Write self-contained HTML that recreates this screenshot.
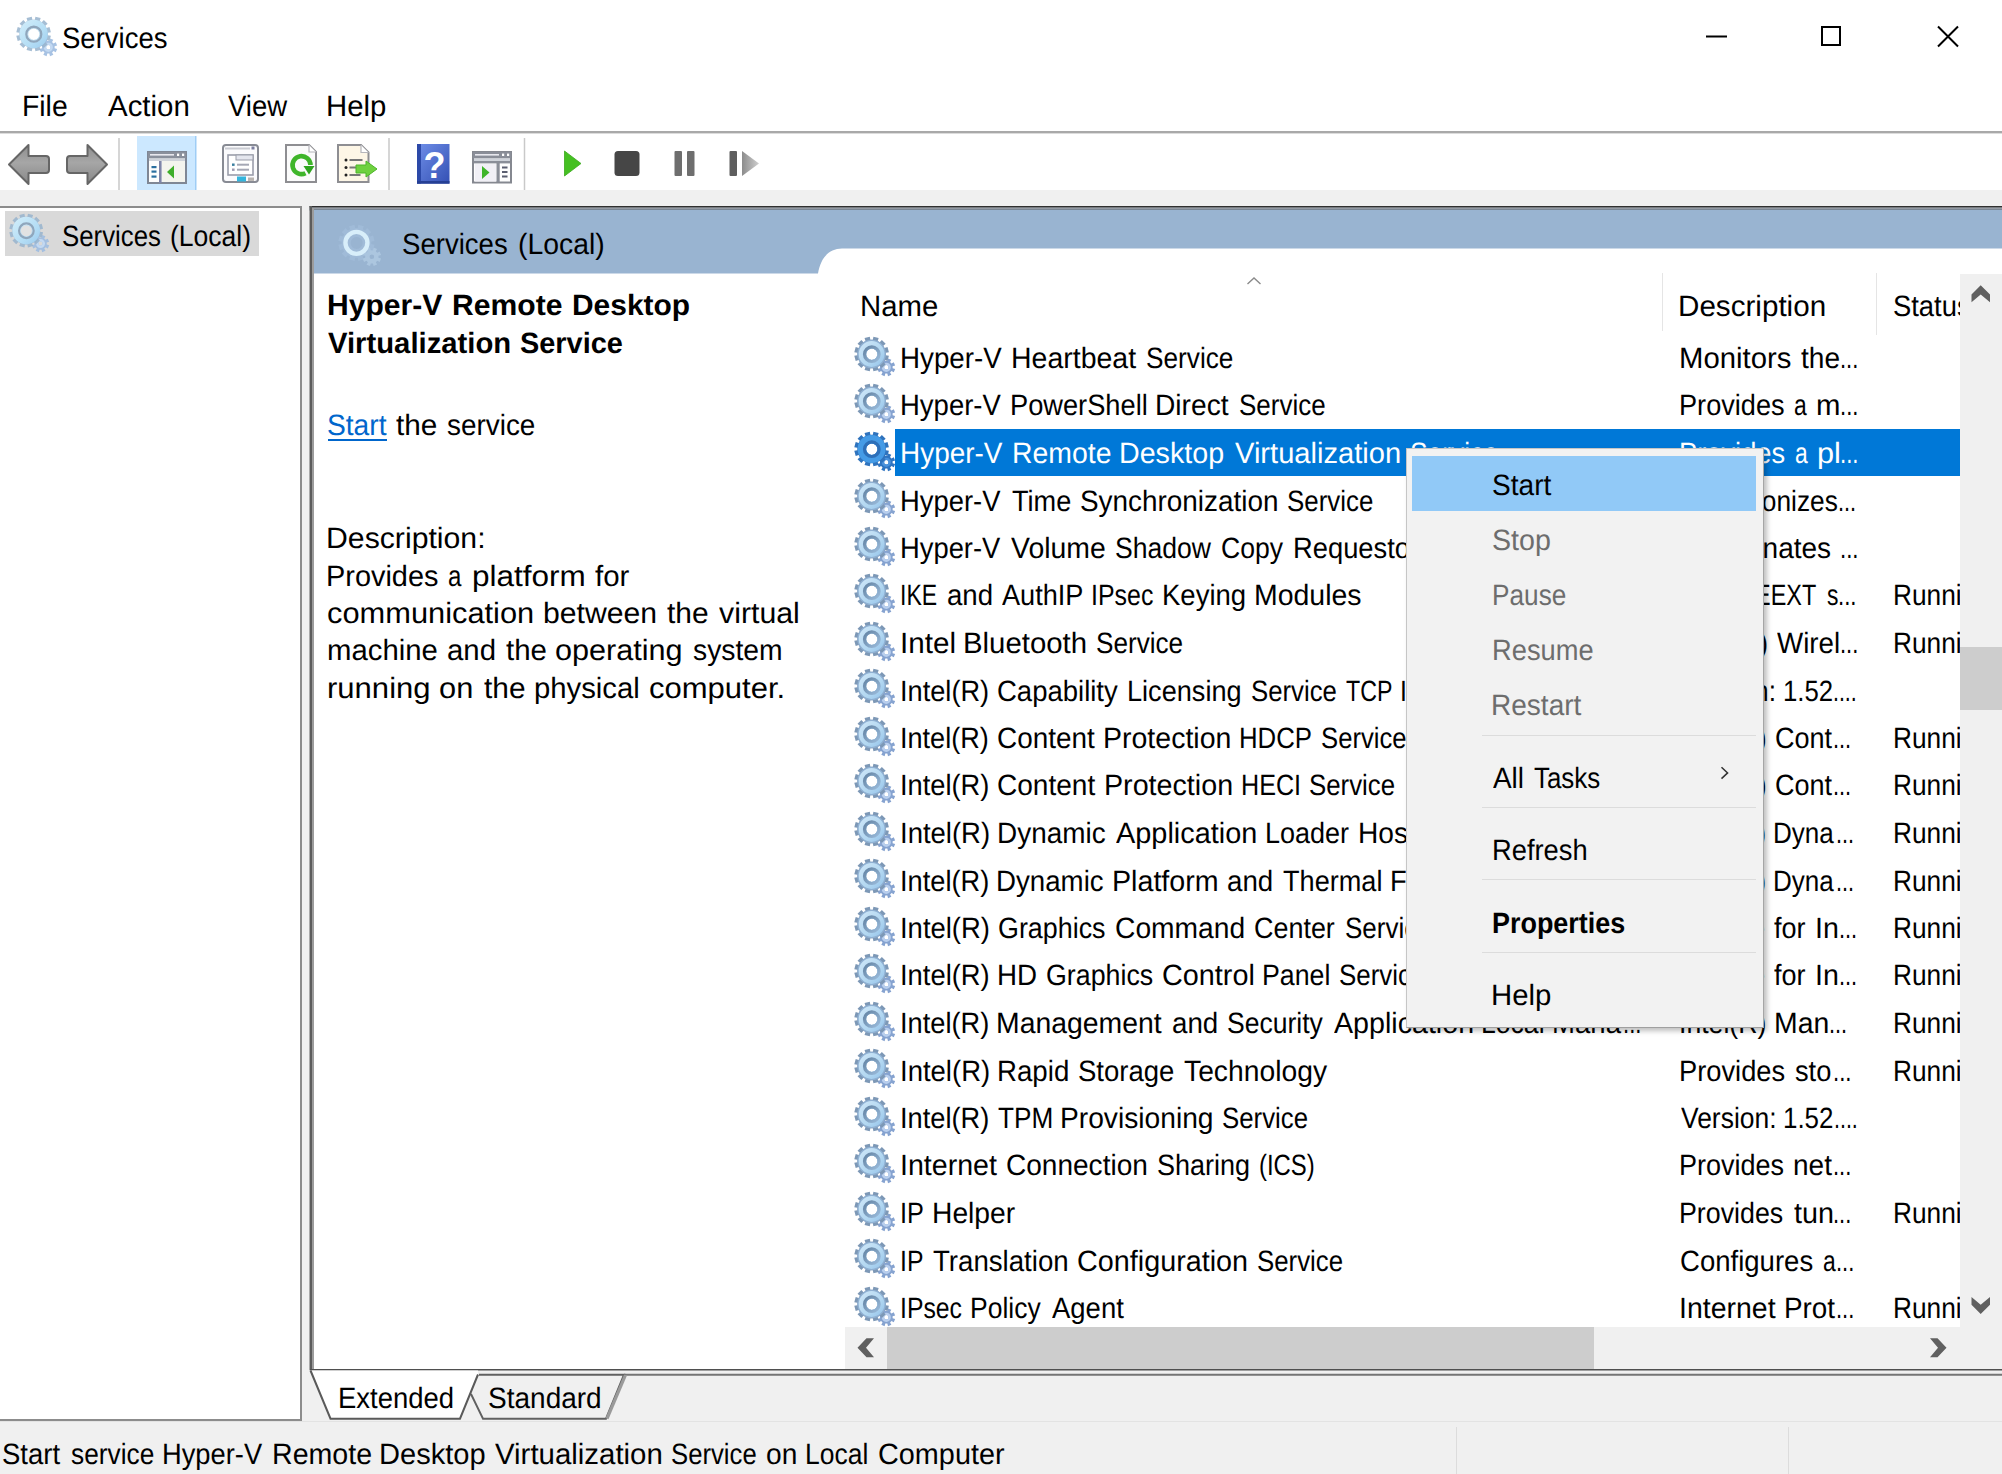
<!DOCTYPE html>
<html lang="en"><head><meta charset="utf-8"><title>Services</title>
<style>
html,body{margin:0;padding:0;}
body{width:2002px;height:1474px;overflow:hidden;background:#fff;position:relative;font-family:"Liberation Sans",sans-serif;}
.a{position:absolute;display:block}
.t{position:absolute;white-space:pre;line-height:40px;font-size:29.3px;color:#000;text-rendering:geometricPrecision;transform-origin:0 0;font-family:"Liberation Sans",sans-serif;}
</style></head><body>
<svg width="0" height="0" style="position:absolute"><defs>
<linearGradient id="gg" x1="0" y1="0" x2="1" y2="1"><stop offset="0" stop-color="#cfe7f8"/><stop offset="0.6" stop-color="#b2d7f1"/><stop offset="1" stop-color="#93c2ea"/></linearGradient>
<linearGradient id="gl" x1="0" y1="0" x2="1" y2="1"><stop offset="0" stop-color="#d3eefa"/><stop offset="0.6" stop-color="#b5def5"/><stop offset="1" stop-color="#9ccbee"/></linearGradient>
<linearGradient id="gr" x1="0" y1="0" x2="1" y2="1"><stop offset="0" stop-color="#5f7f9f"/><stop offset="1" stop-color="#9fc0e0"/></linearGradient>
</defs>
<symbol id="gear" viewBox="0 0 42 42">
<path d="M38.62 32.28 L41.14 33.00 L39.78 36.31 L37.49 35.05 L36.08 36.47 L37.35 38.75 L34.04 40.13 L33.32 37.62 L31.32 37.62 L30.60 40.14 L27.29 38.78 L28.55 36.49 L27.13 35.08 L24.85 36.35 L23.47 33.04 L25.98 32.32 L25.98 30.32 L23.46 29.60 L24.82 26.29 L27.11 27.55 L28.52 26.13 L27.25 23.85 L30.56 22.47 L31.28 24.98 L33.28 24.98 L34.00 22.46 L37.31 23.82 L36.05 26.11 L37.47 27.52 L39.75 26.25 L41.13 29.56 L38.62 30.28 Z M30.10 31.30 a2.20 2.20 0 1 0 4.40 0 a2.20 2.20 0 1 0 -4.40 0 Z" fill="#86a3d0" fill-rule="evenodd"/>
<path d="M27.70 31.30 a4.60 4.60 0 1 0 9.20 0 a4.60 4.60 0 1 0 -9.20 0 Z M30.10 31.30 a2.20 2.20 0 1 0 4.40 0 a2.20 2.20 0 1 0 -4.40 0 Z" fill="#b9cfee" fill-rule="evenodd"/>
<path d="M31.85 19.20 L34.90 19.83 L33.50 25.07 L30.54 24.09 L29.34 26.16 L31.67 28.23 L27.83 32.07 L25.76 29.74 L23.69 30.94 L24.67 33.90 L19.43 35.30 L18.80 32.25 L16.40 32.25 L15.77 35.30 L10.53 33.90 L11.51 30.94 L9.44 29.74 L7.37 32.07 L3.53 28.23 L5.86 26.16 L4.66 24.09 L1.70 25.07 L0.30 19.83 L3.35 19.20 L3.35 16.80 L0.30 16.17 L1.70 10.93 L4.66 11.91 L5.86 9.84 L3.53 7.77 L7.37 3.93 L9.44 6.26 L11.51 5.06 L10.53 2.10 L15.77 0.70 L16.40 3.75 L18.80 3.75 L19.43 0.70 L24.67 2.10 L23.69 5.06 L25.76 6.26 L27.83 3.93 L31.67 7.77 L29.34 9.84 L30.54 11.91 L33.50 10.93 L34.90 16.17 L31.85 16.80 Z M12.10 18.20 a5.70 5.70 0 1 0 11.40 0 a5.70 5.70 0 1 0 -11.40 0 Z" fill="#7d98b6" fill-rule="evenodd"/>
<path d="M3.30 18.00 a14.30 14.30 0 1 0 28.60 0 a14.30 14.30 0 1 0 -28.60 0 Z M12.10 18.20 a5.70 5.70 0 1 0 11.40 0 a5.70 5.70 0 1 0 -11.40 0 Z" fill="#8fb0d2" fill-rule="evenodd"/>
<path d="M4.70 18.00 a12.90 12.90 0 1 0 25.80 0 a12.90 12.90 0 1 0 -25.80 0 Z M12.10 18.20 a5.70 5.70 0 1 0 11.40 0 a5.70 5.70 0 1 0 -11.40 0 Z" fill="url(#gg)" fill-rule="evenodd"/>
<path d="M8.90 18.20 a8.90 8.90 0 1 0 17.80 0 a8.90 8.90 0 1 0 -17.80 0 Z M12.10 18.20 a5.70 5.70 0 1 0 11.40 0 a5.70 5.70 0 1 0 -11.40 0 Z" fill="url(#gr)" fill-rule="evenodd"/>
</symbol>
<symbol id="gears" viewBox="0 0 42 42">
<path d="M38.62 32.28 L41.14 33.00 L39.78 36.31 L37.49 35.05 L36.08 36.47 L37.35 38.75 L34.04 40.13 L33.32 37.62 L31.32 37.62 L30.60 40.14 L27.29 38.78 L28.55 36.49 L27.13 35.08 L24.85 36.35 L23.47 33.04 L25.98 32.32 L25.98 30.32 L23.46 29.60 L24.82 26.29 L27.11 27.55 L28.52 26.13 L27.25 23.85 L30.56 22.47 L31.28 24.98 L33.28 24.98 L34.00 22.46 L37.31 23.82 L36.05 26.11 L37.47 27.52 L39.75 26.25 L41.13 29.56 L38.62 30.28 Z M30.10 31.30 a2.20 2.20 0 1 0 4.40 0 a2.20 2.20 0 1 0 -4.40 0 Z" fill="#2f74c0" fill-rule="evenodd"/>
<path d="M27.70 31.30 a4.60 4.60 0 1 0 9.20 0 a4.60 4.60 0 1 0 -9.20 0 Z M30.10 31.30 a2.20 2.20 0 1 0 4.40 0 a2.20 2.20 0 1 0 -4.40 0 Z" fill="#4a92dc" fill-rule="evenodd"/>
<path d="M31.85 19.20 L34.90 19.83 L33.50 25.07 L30.54 24.09 L29.34 26.16 L31.67 28.23 L27.83 32.07 L25.76 29.74 L23.69 30.94 L24.67 33.90 L19.43 35.30 L18.80 32.25 L16.40 32.25 L15.77 35.30 L10.53 33.90 L11.51 30.94 L9.44 29.74 L7.37 32.07 L3.53 28.23 L5.86 26.16 L4.66 24.09 L1.70 25.07 L0.30 19.83 L3.35 19.20 L3.35 16.80 L0.30 16.17 L1.70 10.93 L4.66 11.91 L5.86 9.84 L3.53 7.77 L7.37 3.93 L9.44 6.26 L11.51 5.06 L10.53 2.10 L15.77 0.70 L16.40 3.75 L18.80 3.75 L19.43 0.70 L24.67 2.10 L23.69 5.06 L25.76 6.26 L27.83 3.93 L31.67 7.77 L29.34 9.84 L30.54 11.91 L33.50 10.93 L34.90 16.17 L31.85 16.80 Z M12.10 18.20 a5.70 5.70 0 1 0 11.40 0 a5.70 5.70 0 1 0 -11.40 0 Z" fill="#2f73bd" fill-rule="evenodd"/>
<path d="M3.60 18.00 a14.00 14.00 0 1 0 28.00 0 a14.00 14.00 0 1 0 -28.00 0 Z M12.10 18.20 a5.70 5.70 0 1 0 11.40 0 a5.70 5.70 0 1 0 -11.40 0 Z" fill="#459be6" fill-rule="evenodd"/>
<path d="M8.90 18.20 a8.90 8.90 0 1 0 17.80 0 a8.90 8.90 0 1 0 -17.80 0 Z M12.10 18.20 a5.70 5.70 0 1 0 11.40 0 a5.70 5.70 0 1 0 -11.40 0 Z" fill="#2d6fb8" fill-rule="evenodd"/>
</symbol>
<symbol id="gearf" viewBox="0 0 42 42">
<path d="M38.62 32.28 L41.14 33.00 L39.78 36.31 L37.49 35.05 L36.08 36.47 L37.35 38.75 L34.04 40.13 L33.32 37.62 L31.32 37.62 L30.60 40.14 L27.29 38.78 L28.55 36.49 L27.13 35.08 L24.85 36.35 L23.47 33.04 L25.98 32.32 L25.98 30.32 L23.46 29.60 L24.82 26.29 L27.11 27.55 L28.52 26.13 L27.25 23.85 L30.56 22.47 L31.28 24.98 L33.28 24.98 L34.00 22.46 L37.31 23.82 L36.05 26.11 L37.47 27.52 L39.75 26.25 L41.13 29.56 L38.62 30.28 Z M30.10 31.30 a2.20 2.20 0 1 0 4.40 0 a2.20 2.20 0 1 0 -4.40 0 Z" fill="#b3cde6" fill-rule="evenodd" opacity="0.7"/>
<path d="M31.85 19.20 L34.90 19.83 L33.50 25.07 L30.54 24.09 L29.34 26.16 L31.67 28.23 L27.83 32.07 L25.76 29.74 L23.69 30.94 L24.67 33.90 L19.43 35.30 L18.80 32.25 L16.40 32.25 L15.77 35.30 L10.53 33.90 L11.51 30.94 L9.44 29.74 L7.37 32.07 L3.53 28.23 L5.86 26.16 L4.66 24.09 L1.70 25.07 L0.30 19.83 L3.35 19.20 L3.35 16.80 L0.30 16.17 L1.70 10.93 L4.66 11.91 L5.86 9.84 L3.53 7.77 L7.37 3.93 L9.44 6.26 L11.51 5.06 L10.53 2.10 L15.77 0.70 L16.40 3.75 L18.80 3.75 L19.43 0.70 L24.67 2.10 L23.69 5.06 L25.76 6.26 L27.83 3.93 L31.67 7.77 L29.34 9.84 L30.54 11.91 L33.50 10.93 L34.90 16.17 L31.85 16.80 Z M12.10 18.20 a5.70 5.70 0 1 0 11.40 0 a5.70 5.70 0 1 0 -11.40 0 Z" fill="#a8c4df" fill-rule="evenodd" opacity="0.45"/>
<path d="M5.00 18.00 a12.60 12.60 0 1 0 25.20 0 a12.60 12.60 0 1 0 -25.20 0 Z M9.20 18.00 a8.40 8.40 0 1 0 16.80 0 a8.40 8.40 0 1 0 -16.80 0 Z" fill="#d8eefa" fill-rule="evenodd"/>
</symbol>
<symbol id="gearl" viewBox="0 0 42 42">
<path d="M38.62 32.28 L41.14 33.00 L39.78 36.31 L37.49 35.05 L36.08 36.47 L37.35 38.75 L34.04 40.13 L33.32 37.62 L31.32 37.62 L30.60 40.14 L27.29 38.78 L28.55 36.49 L27.13 35.08 L24.85 36.35 L23.47 33.04 L25.98 32.32 L25.98 30.32 L23.46 29.60 L24.82 26.29 L27.11 27.55 L28.52 26.13 L27.25 23.85 L30.56 22.47 L31.28 24.98 L33.28 24.98 L34.00 22.46 L37.31 23.82 L36.05 26.11 L37.47 27.52 L39.75 26.25 L41.13 29.56 L38.62 30.28 Z M30.10 31.30 a2.20 2.20 0 1 0 4.40 0 a2.20 2.20 0 1 0 -4.40 0 Z" fill="#9dbbe0" fill-rule="evenodd" opacity="0.9"/>
<path d="M27.70 31.30 a4.60 4.60 0 1 0 9.20 0 a4.60 4.60 0 1 0 -9.20 0 Z M30.10 31.30 a2.20 2.20 0 1 0 4.40 0 a2.20 2.20 0 1 0 -4.40 0 Z" fill="#c3d9f2" fill-rule="evenodd"/>
<path d="M31.85 19.20 L34.90 19.83 L33.50 25.07 L30.54 24.09 L29.34 26.16 L31.67 28.23 L27.83 32.07 L25.76 29.74 L23.69 30.94 L24.67 33.90 L19.43 35.30 L18.80 32.25 L16.40 32.25 L15.77 35.30 L10.53 33.90 L11.51 30.94 L9.44 29.74 L7.37 32.07 L3.53 28.23 L5.86 26.16 L4.66 24.09 L1.70 25.07 L0.30 19.83 L3.35 19.20 L3.35 16.80 L0.30 16.17 L1.70 10.93 L4.66 11.91 L5.86 9.84 L3.53 7.77 L7.37 3.93 L9.44 6.26 L11.51 5.06 L10.53 2.10 L15.77 0.70 L16.40 3.75 L18.80 3.75 L19.43 0.70 L24.67 2.10 L23.69 5.06 L25.76 6.26 L27.83 3.93 L31.67 7.77 L29.34 9.84 L30.54 11.91 L33.50 10.93 L34.90 16.17 L31.85 16.80 Z M12.10 18.20 a5.70 5.70 0 1 0 11.40 0 a5.70 5.70 0 1 0 -11.40 0 Z" fill="#97b3cd" fill-rule="evenodd" opacity="0.85"/>
<path d="M3.40 18.00 a14.20 14.20 0 1 0 28.40 0 a14.20 14.20 0 1 0 -28.40 0 Z M12.10 18.20 a5.70 5.70 0 1 0 11.40 0 a5.70 5.70 0 1 0 -11.40 0 Z" fill="url(#gl)" fill-rule="evenodd"/>
<path d="M9.20 18.20 a8.60 8.60 0 1 0 17.20 0 a8.60 8.60 0 1 0 -17.20 0 Z M11.50 18.20 a6.30 6.30 0 1 0 12.60 0 a6.30 6.30 0 1 0 -12.60 0 Z" fill="#8fa6bc" fill-rule="evenodd"/>
<path d="M11.50 18.20 a6.30 6.30 0 1 0 12.60 0 a6.30 6.30 0 1 0 -12.60 0 Z" fill="#fff" opacity="0.25"/>
</symbol>
</svg>
<svg class="a" style="left:16px;top:16px" width="42" height="42"><use href="#gearl"/></svg>
<svg class="a" style="left:1690px;top:10px" width="290" height="52" viewBox="1690 10 290 52">
<path d="M1706 36.5h21" stroke="#000" stroke-width="2" fill="none"/>
<rect x="1822" y="27" width="18" height="18" stroke="#000" stroke-width="2" fill="none"/>
<path d="M1938 26.5l20 20M1958 26.5l-20 20" stroke="#000" stroke-width="2" fill="none"/>
</svg>
<div class="a" style="left:0px;top:131px;width:2002px;height:2px;background:#a9a9a9;"></div>
<div class="a" style="left:0px;top:133px;width:2002px;height:1px;background:#dcdcdc;"></div>
<div class="a" style="left:0px;top:190px;width:2002px;height:1284px;background:#f0f0f0;"></div>
<svg class="a" style="left:0;top:134px" width="800" height="56" viewBox="0 134 800 56">
<defs>
<linearGradient id="ag" x1="0" y1="0" x2="0" y2="1"><stop offset="0" stop-color="#8e8e8e"/><stop offset="0.45" stop-color="#a6a6a6"/><stop offset="1" stop-color="#888"/></linearGradient>
<linearGradient id="hg" x1="0" y1="0" x2="1" y2="1"><stop offset="0" stop-color="#6f8fe8"/><stop offset="1" stop-color="#3450b4"/></linearGradient>
<linearGradient id="rg" x1="0" y1="0" x2="1" y2="0"><stop offset="0" stop-color="#8c8c8c"/><stop offset="1" stop-color="#cfcfcf"/></linearGradient>
</defs>
<path d="M9 164.5 L28.5 145 L28.5 156 L46 156 Q49 156 49 159 L49 170 Q49 173 46 173 L28.5 173 L28.5 184 Z" fill="url(#ag)" stroke="#666" stroke-width="2" stroke-linejoin="round"/>
<path d="M107 164.5 L87.5 145 L87.5 156 L70 156 Q67 156 67 159 L67 170 Q67 173 70 173 L87.5 173 L87.5 184 Z" fill="url(#ag)" stroke="#666" stroke-width="2" stroke-linejoin="round"/>
<rect x="118.25" y="138" width="1.5" height="52" fill="#c9c9c9"/>
<rect x="388.25" y="138" width="1.5" height="52" fill="#c9c9c9"/>
<rect x="523.75" y="138" width="1.5" height="52" fill="#c9c9c9"/>
<rect x="137" y="136" width="58" height="55" fill="#cce8ff"/><rect x="195" y="136" width="1.5" height="55" fill="#9fcdf5"/>
<g>
<rect x="148" y="152" width="38" height="31" fill="#fdfdfd" stroke="#7f8795" stroke-width="2"/>
<rect x="148" y="152" width="38" height="6.5" fill="#8a909c"/>
<rect x="150" y="154" width="24" height="1.6" fill="#e8e8ee"/><rect x="177" y="153.6" width="2.2" height="2.4" fill="#fff"/><rect x="182" y="153.6" width="2.2" height="2.4" fill="#fff"/>
<rect x="149" y="158.5" width="36" height="2.5" fill="#cfd3da"/>
<rect x="159" y="161" width="2.6" height="22" fill="#7f85a8"/>
<rect x="162" y="161" width="23" height="21" fill="#f4f4ee"/>
<rect x="151.5" y="166" width="5" height="2.2" fill="#2a6f9f"/><rect x="151.5" y="170.5" width="5" height="2.2" fill="#2a6f9f"/><rect x="151.5" y="175.5" width="5" height="2.2" fill="#2a6f9f"/>
<path d="M167 172 L174 165.5 L174 178.5 Z" fill="#3fae2a"/>
</g>
<g>
<rect x="223" y="145" width="35" height="37" rx="3" fill="#fbfbfd" stroke="#888b94" stroke-width="2"/>
<rect x="225" y="147.5" width="25" height="2" fill="#c9cbd2"/><rect x="251.5" y="146.5" width="3" height="3" fill="#7c7fa0"/>
<rect x="228" y="155" width="25" height="20" fill="#fff" stroke="#9a9daa" stroke-width="1.6"/>
<rect x="236" y="155" width="17" height="5" fill="#e4e6ee" stroke="#9a9daa" stroke-width="1"/>
<rect x="232" y="163.5" width="2.6" height="2.4" fill="#3a7f9f"/><rect x="237" y="163.7" width="12" height="2" fill="#a5a8b5"/>
<rect x="232" y="168.5" width="2.6" height="2.4" fill="#a09ab0"/><rect x="237" y="168.7" width="12" height="2" fill="#a5a8b5"/>
<rect x="237" y="176.5" width="9" height="5" fill="#35b5dd"/><rect x="248" y="177.5" width="6" height="3.4" fill="#b9b4b0"/>
</g>
<g>
<path d="M286 145 L309 145 L316 152 L316 182 L286 182 Z" fill="#fbfbfb" stroke="#8e8e92" stroke-width="2" stroke-linejoin="miter"/>
<path d="M309 145 L309 152 L316 152" fill="#fff" stroke="#b5b5bb" stroke-width="1.2"/>
<path d="M310.5 165 A9 9 0 1 0 305.5 173.2" fill="none" stroke="#3fb52a" stroke-width="4.6"/>
<path d="M303.5 166 L314.5 166 L309 174.5 Z" fill="#2fa51f"/>
</g>
<g>
<path d="M338 145 L361 145 L368.5 152.5 L368.5 182 L338 182 Z" fill="#fdf6e6" stroke="#8e8e92" stroke-width="2"/>
<path d="M361 145 L361 152.5 L368.5 152.5" fill="#fff" stroke="#b5b5bb" stroke-width="1.2"/>
<circle cx="346" cy="160" r="1.5" fill="#222"/><rect x="349.5" y="159" width="13" height="2" fill="#777"/>
<circle cx="346" cy="167.5" r="1.5" fill="#222"/><rect x="349.5" y="166.5" width="8" height="2" fill="#777"/>
<circle cx="346" cy="175" r="1.5" fill="#222"/><rect x="349.5" y="174" width="11" height="2" fill="#777"/>
<path d="M356 165 L366 165 L366 161 L377 169 L366 177 L366 173 L356 173 Z" fill="#6fd13f" stroke="#4db52a" stroke-width="1"/>
</g>
<g>
<rect x="417" y="144" width="32.5" height="39.5" fill="url(#hg)"/>
<rect x="417" y="144" width="4" height="39.5" fill="#2c49a8"/>
<rect x="417" y="181" width="32.5" height="2.7" fill="#263f94"/>
<text x="434.5" y="177.5" font-family="Liberation Sans, sans-serif" font-weight="bold" font-size="36" fill="#fff" text-anchor="middle">?</text>
</g>
<g>
<rect x="473" y="152" width="38" height="30.5" fill="#fdfdfd" stroke="#858890" stroke-width="2"/>
<rect x="473" y="152" width="38" height="6.5" fill="#8a8e98"/>
<rect x="475" y="154" width="24" height="1.6" fill="#e8e8ee"/><rect x="502" y="153.6" width="2.2" height="2.4" fill="#fff"/><rect x="507" y="153.6" width="2.2" height="2.4" fill="#fff"/>
<rect x="474" y="158.5" width="36" height="2.5" fill="#cfd3da"/>
<rect x="474" y="161" width="36" height="2.4" fill="#8a8e98"/>
<rect x="496.5" y="163" width="3.2" height="19" fill="#8a8e98"/>
<rect x="475" y="164" width="21" height="17.5" fill="#f1f0f6"/>
<path d="M482 166 L489.5 172.5 L482 179 Z" fill="#3fb52a"/>
<rect x="502" y="166.5" width="5.5" height="2" fill="#5a5e70"/><rect x="502" y="171" width="5.5" height="2" fill="#5a5e70"/><rect x="502" y="175.5" width="5.5" height="2" fill="#5a5e70"/>
</g>
<path d="M564.5 151 L581 163.5 L564.5 176 Z" fill="#45c022" stroke="#3aa81c" stroke-width="0.8"/>
<rect x="614.5" y="151" width="25" height="25" rx="3.5" fill="#464646"/>
<rect x="674.5" y="151" width="7.5" height="25" rx="1" fill="#6e6e6e"/><rect x="687" y="151" width="7.5" height="25" rx="1" fill="#6e6e6e"/>
<rect x="729.5" y="151" width="7.5" height="25" rx="1" fill="#5e5e5e"/><path d="M742 151 L759 163.5 L742 176 Z" fill="url(#rg)"/>
</svg>
<div class="a" style="left:0px;top:206px;width:301.5px;height:1214.5px;background:#fff;border-top:2.5px solid #8c8c8c;border-right:2px solid #8c8c8c;border-bottom:2px solid #8c8c8c;box-sizing:border-box"></div>
<div class="a" style="left:5px;top:211px;width:254px;height:45px;background:#d9d9d9;"></div>
<svg class="a" style="left:8.5px;top:212.5px" width="41" height="41"><use href="#gearl"/></svg>
<svg class="a" style="left:309px;top:205px" width="1693" height="1167" viewBox="309 205 1693 1167">
<rect x="309.5" y="206" width="1693" height="1164.5" fill="#fff"/>
<rect x="309.5" y="206" width="1693" height="1.3" fill="#303030"/>
<rect x="309.5" y="207.3" width="1693" height="1.2" fill="#5b6067"/>
<rect x="309.5" y="208.5" width="1693" height="2" fill="#7a8694"/>
<rect x="309.5" y="206" width="2.5" height="1164.5" fill="#5c5c5c"/>
<rect x="312" y="208" width="2" height="1161" fill="#9c9c9c"/>
</svg>
<svg class="a" style="left:314px;top:210px" width="1688" height="63.5" viewBox="314 210 1688 63.5">
<path d="M314 210 H2002 V248.5 H842 C829 249 821 257 818 273.5 H314 Z" fill="#99b4d1"/></svg>
<svg class="a" style="left:337.5px;top:223.5px" width="44" height="44"><use href="#gearf"/></svg>
<div class="a" style="left:327.5px;top:438.6px;width:59.5px;height:2px;background:#0066cc;"></div>
<svg class="a" style="left:1246px;top:276px" width="16" height="10"><path d="M1.5 8 L8 2 L14.5 8" stroke="#8a8a8a" stroke-width="1.4" fill="none"/></svg>
<div class="a" style="left:1662px;top:273px;width:1.3px;height:58px;background:#e5e5e5;"></div>
<div class="a" style="left:1876px;top:273px;width:1.3px;height:62px;background:#e5e5e5;"></div>
<div class="a" id="list" style="left:845px;top:273px;width:1115px;height:1054px;overflow:hidden">
<div class="a" style="left:49.5px;top:155.7px;width:1065.5px;height:47px;background:#0078d7"></div>
<svg class="a" style="left:8.5px;top:62.5px" width="42" height="42"><use href="#gear"/></svg>
<svg class="a" style="left:8.5px;top:110.0px" width="42" height="42"><use href="#gear"/></svg>
<svg class="a" style="left:8.5px;top:157.5px" width="42" height="42"><use href="#gears"/></svg>
<svg class="a" style="left:8.5px;top:205.0px" width="42" height="42"><use href="#gear"/></svg>
<svg class="a" style="left:8.5px;top:252.5px" width="42" height="42"><use href="#gear"/></svg>
<svg class="a" style="left:8.5px;top:300.0px" width="42" height="42"><use href="#gear"/></svg>
<svg class="a" style="left:8.5px;top:347.5px" width="42" height="42"><use href="#gear"/></svg>
<svg class="a" style="left:8.5px;top:395.0px" width="42" height="42"><use href="#gear"/></svg>
<svg class="a" style="left:8.5px;top:442.5px" width="42" height="42"><use href="#gear"/></svg>
<svg class="a" style="left:8.5px;top:490.0px" width="42" height="42"><use href="#gear"/></svg>
<svg class="a" style="left:8.5px;top:537.5px" width="42" height="42"><use href="#gear"/></svg>
<svg class="a" style="left:8.5px;top:585.0px" width="42" height="42"><use href="#gear"/></svg>
<svg class="a" style="left:8.5px;top:632.5px" width="42" height="42"><use href="#gear"/></svg>
<svg class="a" style="left:8.5px;top:680.0px" width="42" height="42"><use href="#gear"/></svg>
<svg class="a" style="left:8.5px;top:727.5px" width="42" height="42"><use href="#gear"/></svg>
<svg class="a" style="left:8.5px;top:775.0px" width="42" height="42"><use href="#gear"/></svg>
<svg class="a" style="left:8.5px;top:822.5px" width="42" height="42"><use href="#gear"/></svg>
<svg class="a" style="left:8.5px;top:870.0px" width="42" height="42"><use href="#gear"/></svg>
<svg class="a" style="left:8.5px;top:917.5px" width="42" height="42"><use href="#gear"/></svg>
<svg class="a" style="left:8.5px;top:965.0px" width="42" height="42"><use href="#gear"/></svg>
<svg class="a" style="left:8.5px;top:1012.5px" width="42" height="42"><use href="#gear"/></svg>
<span class="t" style="left:54.91px;top:66px;transform:scaleX(0.9463);">Hyper-V </span><span class="t" style="left:165.95px;top:66px;transform:scaleX(0.9720);">Heartbeat </span><span class="t" style="left:300.85px;top:66px;transform:scaleX(0.8946);">Service</span>
<span class="t" style="left:834.00px;top:66px;transform:scaleX(1.0003);">Monitors </span><span class="t" style="left:956.46px;top:66px;transform:scaleX(0.9604);">the</span><span class="t" style="left:995.44px;top:66px;transform:scaleX(0.7521);">...</span>
<span class="t" style="left:54.92px;top:113px;transform:scaleX(0.9384);">Hyper-V </span><span class="t" style="left:165.13px;top:113px;transform:scaleX(0.9295);">PowerShell </span><span class="t" style="left:310.35px;top:113px;transform:scaleX(0.9611);">Direct </span><span class="t" style="left:393.67px;top:113px;transform:scaleX(0.8871);">Service</span>
<span class="t" style="left:834.15px;top:113px;transform:scaleX(0.9259);">Provides </span><span class="t" style="left:949.08px;top:113px;transform:scaleX(0.7800);">a </span><span class="t" style="left:971.06px;top:113px;transform:scaleX(1.0014);">m</span><span class="t" style="left:995.19px;top:113px;transform:scaleX(0.7545);">...</span>
<span class="t" style="left:54.89px;top:161px;transform:scaleX(0.9535);color:#fff;">Hyper-V </span><span class="t" style="left:166.78px;top:161px;transform:scaleX(0.9698);color:#fff;">Remote </span><span class="t" style="left:273.99px;top:161px;transform:scaleX(0.9778);color:#fff;">Desktop </span><span class="t" style="left:389.73px;top:161px;transform:scaleX(0.9943);color:#fff;">Virtualization </span><span class="t" style="left:564.73px;top:161px;transform:scaleX(0.9015);color:#fff;">Service</span>
<span class="t" style="left:834.14px;top:161px;transform:scaleX(0.9308);color:#fff;">Provides </span><span class="t" style="left:949.67px;top:161px;transform:scaleX(0.7800);color:#fff;">a </span><span class="t" style="left:971.73px;top:161px;transform:scaleX(1.0470);color:#fff;">pl</span><span class="t" style="left:995.12px;top:161px;transform:scaleX(0.7577);color:#fff;">...</span>
<span class="t" style="left:54.93px;top:209px;transform:scaleX(0.9349);">Hyper-V </span><span class="t" style="left:166.59px;top:209px;transform:scaleX(0.9261);">Time </span><span class="t" style="left:234.50px;top:209px;transform:scaleX(0.9523);">Synchronization </span><span class="t" style="left:441.69px;top:209px;transform:scaleX(0.8838);">Service</span>
<span class="t" style="left:835.10px;top:209px;transform:scaleX(0.8975);">Synchronizes</span><span class="t" style="left:993.49px;top:209px;transform:scaleX(0.7411);">...</span>
<span class="t" style="left:54.93px;top:256px;transform:scaleX(0.9337);">Hyper-V </span><span class="t" style="left:166.45px;top:256px;transform:scaleX(0.9694);">Volume </span><span class="t" style="left:269.79px;top:256px;transform:scaleX(0.9061);">Shadow </span><span class="t" style="left:376.34px;top:256px;transform:scaleX(0.9070);">Copy </span><span class="t" style="left:447.60px;top:256px;transform:scaleX(0.9327);">Requestor</span>
<span class="t" style="left:835.04px;top:256px;transform:scaleX(0.9566);">Coordinates </span><span class="t" style="left:995.07px;top:256px;transform:scaleX(0.7597);">...</span>
<span class="t" style="left:55.23px;top:303px;transform:scaleX(0.7865);">IKE </span><span class="t" style="left:101.74px;top:303px;transform:scaleX(0.9430);">and </span><span class="t" style="left:157.35px;top:303px;transform:scaleX(0.9262);">AuthIP </span><span class="t" style="left:246.42px;top:303px;transform:scaleX(0.8509);">IPsec </span><span class="t" style="left:317.07px;top:303px;transform:scaleX(0.9397);">Keying </span><span class="t" style="left:408.84px;top:303px;transform:scaleX(0.9715);">Modules</span>
<span class="t" style="left:836.00px;top:303px;transform:scaleX(0.8745);">The </span><span class="t" style="left:888.24px;top:303px;transform:scaleX(0.7984);">IKEEXT </span><span class="t" style="left:982.33px;top:303px;transform:scaleX(0.7800);">s</span><span class="t" style="left:993.11px;top:303px;transform:scaleX(0.7579);">...</span>
<span class="t" style="left:1048.21px;top:303px;transform:scaleX(0.8968);">Running</span>
<span class="t" style="left:54.78px;top:351px;transform:scaleX(1.0111);">Intel </span><span class="t" style="left:118.10px;top:351px;transform:scaleX(1.0019);">Bluetooth </span><span class="t" style="left:250.79px;top:351px;transform:scaleX(0.8921);">Service</span>
<span class="t" style="left:834.14px;top:351px;transform:scaleX(0.9276);">Intel(R) </span><span class="t" style="left:932.35px;top:351px;transform:scaleX(0.9476);">Wirel</span><span class="t" style="left:995.25px;top:351px;transform:scaleX(0.7516);">...</span>
<span class="t" style="left:1048.21px;top:351px;transform:scaleX(0.8968);">Running</span>
<span class="t" style="left:54.94px;top:399px;transform:scaleX(0.9282);">Intel(R) </span><span class="t" style="left:152.26px;top:399px;transform:scaleX(0.9387);">Capability </span><span class="t" style="left:282.25px;top:399px;transform:scaleX(0.9257);">Licensing </span><span class="t" style="left:405.50px;top:399px;transform:scaleX(0.8796);">Service </span><span class="t" style="left:501.05px;top:399px;transform:scaleX(0.7912);">TCP </span><span class="t" style="left:555.25px;top:399px;transform:scaleX(0.8437);">IP </span><span class="t" style="left:586.14px;top:399px;transform:scaleX(0.9550);">Interface</span>
<span class="t" style="left:836.00px;top:399px;transform:scaleX(0.8969);">Version: </span><span class="t" style="left:937.73px;top:399px;transform:scaleX(0.8786);">1.52</span><span class="t" style="left:987.84px;top:399px;transform:scaleX(0.7283);">....</span>
<span class="t" style="left:54.95px;top:446px;transform:scaleX(0.9248);">Intel(R) </span><span class="t" style="left:151.91px;top:446px;transform:scaleX(0.9520);">Content </span><span class="t" style="left:258.24px;top:446px;transform:scaleX(0.9729);">Protection </span><span class="t" style="left:394.27px;top:446px;transform:scaleX(0.8803);">HDCP </span><span class="t" style="left:475.84px;top:446px;transform:scaleX(0.8764);">Service</span>
<span class="t" style="left:834.18px;top:446px;transform:scaleX(0.9122);">Intel(R) </span><span class="t" style="left:929.88px;top:446px;transform:scaleX(0.9226);">Cont</span><span class="t" style="left:987.97px;top:446px;transform:scaleX(0.7419);">...</span>
<span class="t" style="left:1048.21px;top:446px;transform:scaleX(0.8968);">Running</span>
<span class="t" style="left:54.94px;top:493px;transform:scaleX(0.9304);">Intel(R) </span><span class="t" style="left:152.46px;top:493px;transform:scaleX(0.9577);">Content </span><span class="t" style="left:259.41px;top:493px;transform:scaleX(0.9787);">Protection </span><span class="t" style="left:396.30px;top:493px;transform:scaleX(0.8580);">HECI </span><span class="t" style="left:464.40px;top:493px;transform:scaleX(0.8817);">Service</span>
<span class="t" style="left:834.18px;top:493px;transform:scaleX(0.9122);">Intel(R) </span><span class="t" style="left:929.88px;top:493px;transform:scaleX(0.9226);">Cont</span><span class="t" style="left:987.97px;top:493px;transform:scaleX(0.7419);">...</span>
<span class="t" style="left:1048.21px;top:493px;transform:scaleX(0.8968);">Running</span>
<span class="t" style="left:54.92px;top:541px;transform:scaleX(0.9380);">Intel(R) </span><span class="t" style="left:152.28px;top:541px;transform:scaleX(0.9535);">Dynamic </span><span class="t" style="left:271.15px;top:541px;transform:scaleX(0.9856);">Application </span><span class="t" style="left:420.11px;top:541px;transform:scaleX(0.9214);">Loader </span><span class="t" style="left:513.30px;top:541px;transform:scaleX(0.9599);">Host </span><span class="t" style="left:579.89px;top:541px;transform:scaleX(0.9651);">Interface </span><span class="t" style="left:698.59px;top:541px;transform:scaleX(0.8890);">Service</span>
<span class="t" style="left:834.19px;top:541px;transform:scaleX(0.9059);">Intel(R) </span><span class="t" style="left:928.39px;top:541px;transform:scaleX(0.8890);">Dyna</span><span class="t" style="left:990.96px;top:541px;transform:scaleX(0.7380);">...</span>
<span class="t" style="left:1048.21px;top:541px;transform:scaleX(0.8968);">Running</span>
<span class="t" style="left:54.94px;top:589px;transform:scaleX(0.9290);">Intel(R) </span><span class="t" style="left:151.40px;top:589px;transform:scaleX(0.9444);">Dynamic </span><span class="t" style="left:267.20px;top:589px;transform:scaleX(0.9778);">Platform </span><span class="t" style="left:382.29px;top:589px;transform:scaleX(0.9453);">and </span><span class="t" style="left:438.03px;top:589px;transform:scaleX(0.9257);">Thermal </span><span class="t" style="left:544.98px;top:589px;transform:scaleX(0.9324);">Framework </span><span class="t" style="left:691.78px;top:589px;transform:scaleX(0.8804);">Service</span>
<span class="t" style="left:834.19px;top:589px;transform:scaleX(0.9059);">Intel(R) </span><span class="t" style="left:928.39px;top:589px;transform:scaleX(0.8890);">Dyna</span><span class="t" style="left:990.96px;top:589px;transform:scaleX(0.7380);">...</span>
<span class="t" style="left:1048.21px;top:589px;transform:scaleX(0.8968);">Running</span>
<span class="t" style="left:54.93px;top:636px;transform:scaleX(0.9366);">Intel(R) </span><span class="t" style="left:153.13px;top:636px;transform:scaleX(0.9174);">Graphics </span><span class="t" style="left:269.93px;top:636px;transform:scaleX(0.9632);">Command </span><span class="t" style="left:408.73px;top:636px;transform:scaleX(0.9193);">Center </span><span class="t" style="left:499.72px;top:636px;transform:scaleX(0.8876);">Service</span>
<span class="t" style="left:835.13px;top:636px;transform:scaleX(0.8679);">Service </span><span class="t" style="left:929.45px;top:636px;transform:scaleX(0.9220);">for </span><span class="t" style="left:969.89px;top:636px;transform:scaleX(0.9769);">In</span><span class="t" style="left:993.62px;top:636px;transform:scaleX(0.7442);">...</span>
<span class="t" style="left:1048.21px;top:636px;transform:scaleX(0.8968);">Running</span>
<span class="t" style="left:54.93px;top:683px;transform:scaleX(0.9337);">Intel(R) </span><span class="t" style="left:151.86px;top:683px;transform:scaleX(0.9472);">HD </span><span class="t" style="left:200.72px;top:683px;transform:scaleX(0.9145);">Graphics </span><span class="t" style="left:317.15px;top:683px;transform:scaleX(0.9828);">Control </span><span class="t" style="left:417.44px;top:683px;transform:scaleX(0.9132);">Panel </span><span class="t" style="left:494.40px;top:683px;transform:scaleX(0.8848);">Service</span>
<span class="t" style="left:835.13px;top:683px;transform:scaleX(0.8679);">Service </span><span class="t" style="left:929.45px;top:683px;transform:scaleX(0.9220);">for </span><span class="t" style="left:969.89px;top:683px;transform:scaleX(0.9769);">In</span><span class="t" style="left:993.62px;top:683px;transform:scaleX(0.7442);">...</span>
<span class="t" style="left:1048.21px;top:683px;transform:scaleX(0.8968);">Running</span>
<span class="t" style="left:54.94px;top:731px;transform:scaleX(0.9300);">Intel(R) </span><span class="t" style="left:151.45px;top:731px;transform:scaleX(0.9687);">Management </span><span class="t" style="left:326.78px;top:731px;transform:scaleX(0.9464);">and </span><span class="t" style="left:381.68px;top:731px;transform:scaleX(0.9060);">Security </span><span class="t" style="left:488.64px;top:731px;transform:scaleX(0.9773);">Application </span><span class="t" style="left:636.39px;top:731px;transform:scaleX(0.9073);">Local </span><span class="t" style="left:707.45px;top:731px;transform:scaleX(0.9415);">Mana</span><span class="t" style="left:778.22px;top:731px;transform:scaleX(0.7532);">...</span>
<span class="t" style="left:834.18px;top:731px;transform:scaleX(0.9095);">Intel(R) </span><span class="t" style="left:928.59px;top:731px;transform:scaleX(0.9694);">Man</span><span class="t" style="left:983.71px;top:731px;transform:scaleX(0.7402);">...</span>
<span class="t" style="left:1048.21px;top:731px;transform:scaleX(0.8968);">Running</span>
<span class="t" style="left:54.92px;top:779px;transform:scaleX(0.9387);">Intel(R) </span><span class="t" style="left:152.37px;top:779px;transform:scaleX(0.9440);">Rapid </span><span class="t" style="left:233.29px;top:779px;transform:scaleX(0.9396);">Storage </span><span class="t" style="left:339.33px;top:779px;transform:scaleX(0.9650);">Technology</span>
<span class="t" style="left:834.14px;top:779px;transform:scaleX(0.9310);">Provides </span><span class="t" style="left:950.46px;top:779px;transform:scaleX(0.9296);">sto</span><span class="t" style="left:987.62px;top:779px;transform:scaleX(0.7577);">...</span>
<span class="t" style="left:1048.21px;top:779px;transform:scaleX(0.8968);">Running</span>
<span class="t" style="left:54.94px;top:826px;transform:scaleX(0.9295);">Intel(R) </span><span class="t" style="left:153.34px;top:826px;transform:scaleX(0.8935);">TPM </span><span class="t" style="left:215.27px;top:826px;transform:scaleX(0.9617);">Provisioning </span><span class="t" style="left:377.37px;top:826px;transform:scaleX(0.8809);">Service</span>
<span class="t" style="left:836.00px;top:826px;transform:scaleX(0.9022);">Version: </span><span class="t" style="left:938.30px;top:826px;transform:scaleX(0.8845);">1.52</span><span class="t" style="left:988.73px;top:826px;transform:scaleX(0.7319);">....</span>
<span class="t" style="left:54.85px;top:873px;transform:scaleX(0.9760);">Internet </span><span class="t" style="left:161.46px;top:873px;transform:scaleX(0.9569);">Connection </span><span class="t" style="left:311.86px;top:873px;transform:scaleX(0.9222);">Sharing </span><span class="t" style="left:413.71px;top:873px;transform:scaleX(0.8152);">(ICS)</span>
<span class="t" style="left:834.16px;top:873px;transform:scaleX(0.9214);">Provides </span><span class="t" style="left:948.36px;top:873px;transform:scaleX(0.9557);">net</span><span class="t" style="left:988.25px;top:873px;transform:scaleX(0.7516);">...</span>
<span class="t" style="left:55.08px;top:921px;transform:scaleX(0.8624);">IP </span><span class="t" style="left:86.59px;top:921px;transform:scaleX(0.9637);">Helper</span>
<span class="t" style="left:834.17px;top:921px;transform:scaleX(0.9147);">Provides </span><span class="t" style="left:948.52px;top:921px;transform:scaleX(0.9817);">tun</span><span class="t" style="left:988.35px;top:921px;transform:scaleX(0.7474);">...</span>
<span class="t" style="left:1048.21px;top:921px;transform:scaleX(0.8968);">Running</span>
<span class="t" style="left:55.11px;top:969px;transform:scaleX(0.8457);">IP </span><span class="t" style="left:87.98px;top:969px;transform:scaleX(0.9431);">Translation </span><span class="t" style="left:232.19px;top:969px;transform:scaleX(0.9819);">Configuration </span><span class="t" style="left:411.92px;top:969px;transform:scaleX(0.8815);">Service</span>
<span class="t" style="left:835.06px;top:969px;transform:scaleX(0.9398);">Configures </span><span class="t" style="left:977.55px;top:969px;transform:scaleX(0.7800);">a</span><span class="t" style="left:991.28px;top:969px;transform:scaleX(0.7505);">...</span>
<span class="t" style="left:55.11px;top:1016px;transform:scaleX(0.8458);">IPsec </span><span class="t" style="left:125.42px;top:1016px;transform:scaleX(0.9046);">Policy </span><span class="t" style="left:207.12px;top:1016px;transform:scaleX(0.9379);">Agent</span>
<span class="t" style="left:834.06px;top:1016px;transform:scaleX(0.9720);">Internet </span><span class="t" style="left:939.30px;top:1016px;transform:scaleX(0.9500);">Prot</span><span class="t" style="left:991.32px;top:1016px;transform:scaleX(0.7488);">...</span>
<span class="t" style="left:1048.21px;top:1016px;transform:scaleX(0.8968);">Running</span>
<span class="t" style="left:1047.77px;top:14px;transform:scaleX(0.9344);">Status</span></div>
<div class="a" style="left:1960px;top:273.5px;width:42px;height:1054px;background:#f0f0f0;"></div>
<div class="a" style="left:1960px;top:647px;width:42px;height:63px;background:#cdcdcd;"></div>
<svg class="a" style="left:1968px;top:283px" width="26" height="22"><path d="M3.5 19.2 L3.5 11.5 L12.7 2.3 L22 11.5 L22 19.2 L12.7 11.5 Z" fill="#606060"/></svg>
<svg class="a" style="left:1968px;top:1295px" width="26" height="22"><path d="M3.5 2 L3.5 9.7 L12.7 19 L22 9.7 L22 2 L12.7 9.7 Z" fill="#606060"/></svg>
<div class="a" style="left:845px;top:1327px;width:1157px;height:42px;background:#f0f0f0;"></div>
<div class="a" style="left:887px;top:1327px;width:707px;height:42px;background:#cdcdcd;"></div>
<svg class="a" style="left:855px;top:1336px" width="22" height="24"><path d="M19 2.2 L11.5 2.2 L2.5 11.7 L11.5 21.3 L19 21.3 L11 11.7 Z" fill="#606060"/></svg>
<svg class="a" style="left:1927px;top:1336px" width="22" height="24"><path d="M3 2.2 L10.5 2.2 L19.5 11.7 L10.5 21.3 L3 21.3 L11 11.7 Z" fill="#606060"/></svg>
<div class="a" style="left:309.5px;top:1368.5px;width:1700px;height:2px;background:#4f4f4f;"></div>
<svg class="a" style="left:300px;top:1370px" width="1702" height="52" viewBox="300 1370 1702 52">
<rect x="302" y="1370.5" width="1700" height="50" fill="#f0f0f0"/>
<path d="M624 1374.8 H2002" stroke="#747474" stroke-width="2"/>
<path d="M479 1374.7 H624 L606 1418.7 H483 L471 1394" fill="#f0f0f0" stroke="#606060" stroke-width="1.9"/>
<path d="M625.5 1375 L607 1418.7" stroke="#9a9a9a" stroke-width="3.2"/>
<path d="M310.5 1370.5 L330.5 1418.7 H460 L478 1374.5 L478 1370.5 Z" fill="#fff"/>
<path d="M310.5 1370.5 L330.5 1418.7 H460 L478 1374.5" fill="none" stroke="#5a5a5a" stroke-width="2"/>
</svg>
<div class="a" style="left:0px;top:1421px;width:2002px;height:1px;background:#e3e3e3;"></div>
<div class="a" style="left:1456px;top:1427px;width:1.3px;height:47px;background:#dcdcdc;"></div>
<div class="a" style="left:1788px;top:1427px;width:1.3px;height:47px;background:#dcdcdc;"></div>
<span class="t" style="left:62.06px;top:19px;transform:scaleX(0.9395);">Services</span>
<span class="t" style="left:22.06px;top:87px;transform:scaleX(0.9676);">File</span>
<span class="t" style="left:107.50px;top:87px;transform:scaleX(1.0044);">Action</span>
<span class="t" style="left:228.00px;top:87px;transform:scaleX(0.9400);">View</span>
<span class="t" style="left:326.00px;top:87px;transform:scaleX(1.0005);">Help</span>
<span class="t" style="left:62.12px;top:217px;transform:scaleX(0.8810);">Services </span><span class="t" style="left:170.49px;top:217px;transform:scaleX(0.9056);">(Local)</span>
<span class="t" style="left:402.06px;top:225px;transform:scaleX(0.9408);">Services </span><span class="t" style="left:517.55px;top:225px;transform:scaleX(0.9674);">(Local)</span>
<span class="t" style="left:326.97px;top:286px;transform:scaleX(1.0268);font-weight:bold;">Hyper-V</span>
<span class="t" style="left:451.67px;top:286px;transform:scaleX(1.0277);font-weight:bold;">Remote</span>
<span class="t" style="left:572.38px;top:286px;transform:scaleX(1.0211);font-weight:bold;">Desktop</span>
<span class="t" style="left:328.00px;top:324px;transform:scaleX(0.9988);font-weight:bold;">Virtualization</span>
<span class="t" style="left:520.20px;top:324px;transform:scaleX(0.9868);font-weight:bold;">Service</span>
<span class="t" style="left:327.04px;top:406px;transform:scaleX(0.9615);color:#0066cc;">Start</span>
<span class="t" style="left:396.00px;top:406px;transform:scaleX(1.0162);">the </span><span class="t" style="left:447.35px;top:406px;transform:scaleX(0.9523);">service</span>
<span class="t" style="left:325.94px;top:519px;transform:scaleX(1.0316);">Description:</span>
<span class="t" style="left:326.03px;top:557px;transform:scaleX(0.9863);">Provides </span><span class="t" style="left:448.25px;top:557px;transform:scaleX(0.8218);">a </span><span class="t" style="left:471.61px;top:557px;transform:scaleX(1.0755);">platform </span><span class="t" style="left:595.20px;top:557px;transform:scaleX(1.0044);">for</span>
<span class="t" style="left:326.95px;top:594px;transform:scaleX(1.0518);">communication </span><span class="t" style="left:543.11px;top:594px;transform:scaleX(1.0305);">between </span><span class="t" style="left:667.23px;top:594px;transform:scaleX(1.0221);">the </span><span class="t" style="left:718.85px;top:594px;transform:scaleX(1.0340);">virtual</span>
<span class="t" style="left:327.00px;top:631px;transform:scaleX(1.0006);">machine </span><span class="t" style="left:446.71px;top:631px;transform:scaleX(1.0029);">and </span><span class="t" style="left:505.64px;top:631px;transform:scaleX(1.0061);">the </span><span class="t" style="left:555.46px;top:631px;transform:scaleX(1.0445);">operating </span><span class="t" style="left:692.91px;top:631px;transform:scaleX(0.9661);">system</span>
<span class="t" style="left:326.94px;top:669px;transform:scaleX(1.0597);">running </span><span class="t" style="left:439.37px;top:669px;transform:scaleX(1.0512);">on </span><span class="t" style="left:483.56px;top:669px;transform:scaleX(1.0192);">the </span><span class="t" style="left:534.05px;top:669px;transform:scaleX(0.9997);">physical </span><span class="t" style="left:648.59px;top:669px;transform:scaleX(1.0585);">computer.</span>
<span class="t" style="left:860.00px;top:287px;transform:scaleX(1.0018);">Name</span>
<span class="t" style="left:1678.48px;top:287px;transform:scaleX(1.0108);">Description</span>
<span class="t" style="left:337.62px;top:1379px;transform:scaleX(0.9377);">Extended</span>
<span class="t" style="left:487.54px;top:1379px;transform:scaleX(0.9562);">Standard</span>
<span class="t" style="left:2.36px;top:1435px;transform:scaleX(0.9385);">Start</span>
<span class="t" style="left:70.60px;top:1435px;transform:scaleX(0.8971);">service</span>
<span class="t" style="left:162.34px;top:1435px;transform:scaleX(0.9319);">Hyper-V</span>
<span class="t" style="left:272.05px;top:1435px;transform:scaleX(0.9758);">Remote</span>
<span class="t" style="left:379.32px;top:1435px;transform:scaleX(0.9925);">Desktop</span>
<span class="t" style="left:494.80px;top:1435px;transform:scaleX(1.0036);">Virtualization</span>
<span class="t" style="left:671.12px;top:1435px;transform:scaleX(0.8773);">Service</span>
<span class="t" style="left:765.54px;top:1435px;transform:scaleX(0.9604);">on</span>
<span class="t" style="left:805.19px;top:1435px;transform:scaleX(0.9032);">Local</span>
<span class="t" style="left:877.72px;top:1435px;transform:scaleX(0.9837);">Computer</span>
<div class="a" id="menu" style="left:1405.5px;top:448px;width:358px;height:580px;background:#f2f2f2;box-sizing:border-box;border:1px solid #c6c6c6;border-right:1.5px solid #a6a6a6;border-bottom:1.5px solid #a0a0a0;box-shadow:3px 3px 5px rgba(0,0,0,0.25)">
<div class="a" style="left:5.5px;top:7px;width:343.70000000000005px;height:54.5px;background:#91c9f7"></div>
<div class="a" style="left:75.5px;top:285.49999999999994px;width:274px;height:1.6px;background:#dcdcdc"></div>
<div class="a" style="left:75.5px;top:357.7px;width:274px;height:1.6px;background:#dcdcdc"></div>
<div class="a" style="left:75.5px;top:429.7px;width:274px;height:1.6px;background:#dcdcdc"></div>
<div class="a" style="left:75.5px;top:502.7px;width:274px;height:1.6px;background:#dcdcdc"></div>
<svg class="a" style="left:311.5px;top:315px" width="14" height="18"><path d="M3.5 3.2 L9.6 8.9 L3.5 14.6" stroke="#333" stroke-width="1.5" fill="none"/></svg>
<span class="t" style="left:85.94px;top:17px;transform:scaleX(0.9583);">Start</span>
<span class="t" style="left:85.92px;top:72px;transform:scaleX(0.9765);color:#6d6d6d;">Stop</span>
<span class="t" style="left:85.11px;top:127px;transform:scaleX(0.8949);color:#6d6d6d;">Pause</span>
<span class="t" style="left:85.04px;top:182px;transform:scaleX(0.9319);color:#6d6d6d;">Resume</span>
<span class="t" style="left:84.99px;top:237px;transform:scaleX(0.9567);color:#6d6d6d;">Restart</span>
<span class="t" style="left:86.90px;top:310px;transform:scaleX(0.9526);">All </span><span class="t" style="left:127.38px;top:310px;transform:scaleX(0.8838);">Tasks</span>
<span class="t" style="left:85.03px;top:382px;transform:scaleX(0.9325);">Refresh</span>
<span class="t" style="left:85.98px;top:455px;transform:scaleX(0.9197);font-weight:bold;">Properties</span>
<span class="t" style="left:84.90px;top:527px;transform:scaleX(1.0022);">Help</span></div>
</body></html>
